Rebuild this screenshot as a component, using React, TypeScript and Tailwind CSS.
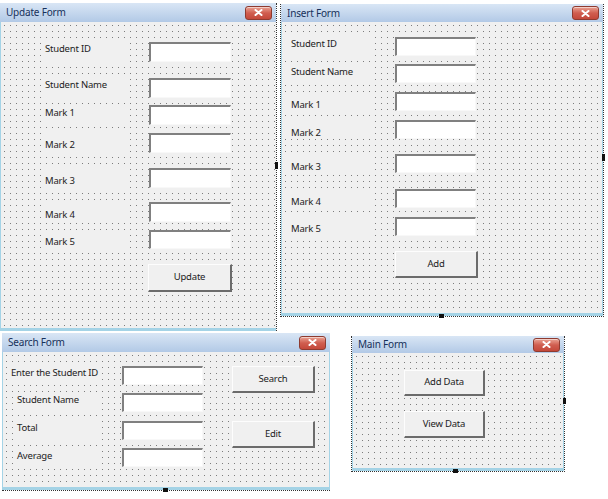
import React from 'react';

// dotted design grid used by every form body
const canvas =
  "bg-[#f0f0f0] bg-[image:radial-gradient(circle_at_3.5px_3.5px,#7c7c7c_0.6px,transparent_1px)] bg-size-[6px_6px]";

function CloseBox() {
  return (
    <div className="w-[27px] h-[14px] rounded-[3px] border border-[#8e3b30] bg-linear-to-b from-[#e9a294] via-[#d05e50] to-[#c4483a] flex items-center justify-center shadow-[inset_0_1px_0_rgba(255,255,255,0.5)]">
      <svg width="9" height="7" viewBox="0 0 9 7">
        <path d="M1.5 1 L7.5 6 M7.5 1 L1.5 6" stroke="white" strokeWidth="2" strokeLinecap="round" />
      </svg>
    </div>
  );
}

function TitleBar({ title, h }: { title: string; h: string }) {
  return (
    <div
      className={`${h} flex items-center justify-between pl-[6px] pr-[4px] bg-linear-to-b from-[#d9e6f5] to-[#b2c9e6] text-[10px] tracking-[-0.2px] text-[#16305a]`}
    >
      <span>{title}</span>
      <CloseBox />
    </div>
  );
}

function TextBox({ cls }: { cls: string }) {
  return (
    <div
      className={`bg-white border-t-2 border-l-2 border-r border-b border-t-[#808080] border-l-[#808080] border-r-[#f8f8f8] border-b-[#f8f8f8] ${cls}`}
    />
  );
}

function Btn({ label, cls }: { label: string; cls: string }) {
  return (
    <div
      className={`bg-[#f0f0f0] border-t border-l border-r-2 border-b-2 border-t-[#fdfdfd] border-l-[#fdfdfd] border-r-[#6b6b6b] border-b-[#6b6b6b] flex items-center justify-center text-[9.5px] tracking-[-0.2px] text-[#222] ${cls}`}
    >
      {label}
    </div>
  );
}

function Field({
  row,
  box,
  pad,
  text,
  tb,
}: {
  row: string;
  box: string;
  pad: string;
  text: string;
  tb: string;
}) {
  return (
    <div className={`flex items-start ${row}`}>
      <div
        className={`h-full bg-[#f0f0f0] leading-[13px] text-[9.5px] tracking-[-0.2px] text-[#222] whitespace-nowrap ${box} ${pad}`}
      >
        {text}
      </div>
      <TextBox cls={`h-full ${tb}`} />
    </div>
  );
}

function Handle({ cls }: { cls: string }) {
  return <div className={`absolute bg-[#111] ${cls}`} />;
}

function UpdateForm() {
  const box = "ml-[40px] w-[85px] pl-[4px]";
  const tb = "ml-[23px] w-[82px]";
  return (
    <div className="relative w-[277px] mt-[3px] border-r border-dotted border-[#333]">
      <TitleBar title="Update Form" h="h-[19px]" />
      <div className={`h-[309px] ${canvas} flex flex-col border-l border-b-[3px] border-[#a4d3e6]`}>
        <Field row="mt-[20px] h-[20px]" box={box} pad="pt-0" text="Student ID" tb={tb} />
        <Field row="mt-[16px] h-[20px]" box={box} pad="pt-0" text="Student Name" tb={tb} />
        <Field row="mt-[7px] h-[20px]" box={box} pad="pt-[1px]" text="Mark 1" tb={tb} />
        <Field row="mt-[8px] h-[20px]" box={box} pad="pt-[5px]" text="Mark 2" tb={tb} />
        <Field row="mt-[15px] h-[20px]" box={box} pad="pt-[6px]" text="Mark 3" tb={tb} />
        <Field row="mt-[14px] h-[20px]" box={box} pad="pt-[6px]" text="Mark 4" tb={tb} />
        <Field row="mt-[8px] h-[19px]" box={box} pad="pt-[5px]" text="Mark 5" tb={tb} />
        <Btn label="Update" cls="mt-[15px] ml-[147px] w-[84px] h-[28px]" />
      </div>
      <Handle cls="top-[159px] -right-[2px] w-[3px] h-[7px]" />
    </div>
  );
}

function InsertForm() {
  const box = "ml-[3px] w-[87px] pl-[6px]";
  const tb = "ml-[23px] w-[81px]";
  return (
    <div className="relative w-[324px] ml-[3px] mt-[4px] border-x border-b border-dotted border-[#333]">
      <TitleBar title="Insert Form" h="h-[18px]" />
      <div className={`h-[294px] ${canvas} flex flex-col border-x border-b-[3px] border-[#a4d3e6]`}>
        <Field row="mt-[15px] h-[19px]" box={box} pad="pt-0" text="Student ID" tb={tb} />
        <Field row="mt-[8px] h-[19px]" box={box} pad="pt-[1px]" text="Student Name" tb={tb} />
        <Field row="mt-[9px] h-[19px]" box={box} pad="pt-[6px]" text="Mark 1" tb={tb} />
        <Field row="mt-[9px] h-[19px]" box={box} pad="pt-[6px]" text="Mark 2" tb={tb} />
        <Field row="mt-[15px] h-[19px]" box={box} pad="pt-[6px]" text="Mark 3" tb={tb} />
        <Field row="mt-[16px] h-[19px]" box={box} pad="pt-[6px]" text="Mark 4" tb={tb} />
        <Field row="mt-[9px] h-[19px]" box={box} pad="pt-[5px]" text="Mark 5" tb={tb} />
        <Btn label="Add" cls="mt-[15px] ml-[113px] w-[83px] h-[27px]" />
      </div>
      <Handle cls="-bottom-[2px] left-[158px] w-[5px] h-[4px]" />
      <Handle cls="top-[150px] -right-[2px] w-[3px] h-[7px]" />
    </div>
  );
}

function SearchForm() {
  const tb = "ml-[22px] w-[81px]";
  return (
    <div className="relative w-[328px] ml-[2px] mt-[2px] border-b border-dotted border-[#333]">
      <TitleBar title="Search Form" h="h-[19px]" />
      <div className={`h-[138px] ${canvas} flex items-start border-x border-b-[3px] border-[#a4d3e6]`}>
        <div className="flex flex-col">
          <Field row="mt-[14px] h-[19px]" box="ml-[5px] w-[92px] pl-[3px]" pad="pt-0" text="Enter the Student ID" tb={tb} />
          <Field row="mt-[8px] h-[19px]" box="ml-[11px] w-[86px] pl-[3px]" pad="pt-0" text="Student Name" tb={tb} />
          <Field row="mt-[9px] h-[19px]" box="ml-[11px] w-[86px] pl-[3px]" pad="pt-0" text="Total" tb={tb} />
          <Field row="mt-[8px] h-[19px]" box="ml-[11px] w-[86px] pl-[3px]" pad="pt-[1px]" text="Average" tb={tb} />
        </div>
        <div className="flex flex-col ml-[29px] pt-[14px]">
          <Btn label="Search" cls="w-[83px] h-[27px]" />
          <Btn label="Edit" cls="mt-[28px] w-[83px] h-[27px]" />
        </div>
      </div>
      <Handle cls="-bottom-[2px] left-[161px] w-[5px] h-[4px]" />
    </div>
  );
}

function MainForm() {
  return (
    <div className="relative w-[214px] ml-[21px] mt-[5px] border-x border-b border-dotted border-[#333]">
      <TitleBar title="Main Form" h="h-[17px]" />
      <div className={`h-[118px] ${canvas} flex flex-col border-x border-b-[3px] border-[#a4d3e6]`}>
        <Btn label="Add Data" cls="mt-[17px] ml-[51px] w-[81px] h-[26px]" />
        <Btn label="View Data" cls="mt-[15px] ml-[51px] w-[81px] h-[27px]" />
      </div>
      <Handle cls="-bottom-[2px] left-[101px] w-[5px] h-[4px]" />
      <Handle cls="top-[62px] -right-[2px] w-[3px] h-[6px]" />
    </div>
  );
}

export default function App() {
  return (
    <div className="w-[608px] h-[499px] bg-white overflow-hidden font-['Noto_Sans',sans-serif]">
      <div className="flex items-start">
        <UpdateForm />
        <InsertForm />
      </div>
      <div className="flex items-start">
        <SearchForm />
        <MainForm />
      </div>
    </div>
  );
}
